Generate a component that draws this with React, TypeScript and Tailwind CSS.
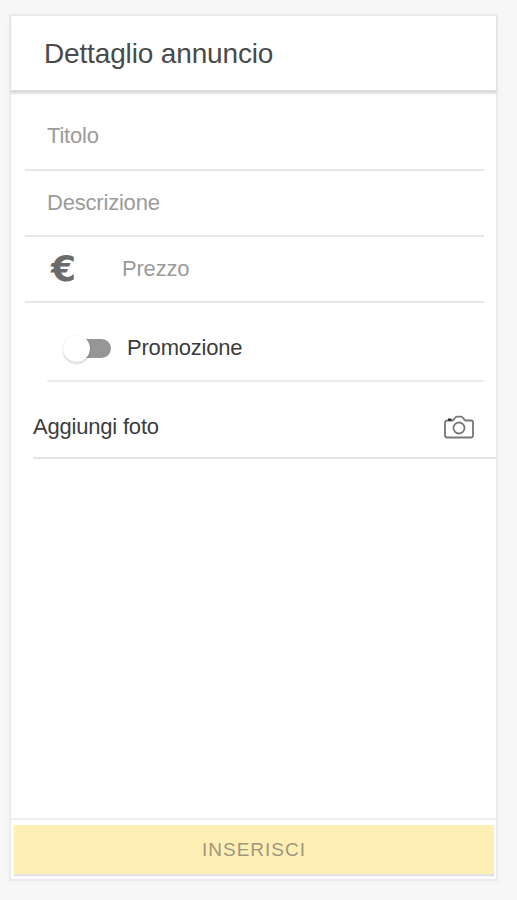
import { useState } from 'react'

const fields = [
  { name: 'titolo', placeholder: 'Titolo', height: 'h-[69px]' },
  { name: 'descrizione', placeholder: 'Descrizione', height: 'h-[66px]' },
]

function CameraIcon() {
  return (
    <svg className="h-6 w-[30px]" viewBox="0 0 30 24" fill="none" stroke="#777" strokeWidth={1.8}>
      <path d="M3 5.5h5.2c.9 0 1.300-.5 1.800-1.200l.9-1.300c.6-.8 1.100-1.300 2-1.300h4.200c.9 0 1.400.5 2 1.300l.9 1.300c.5.7.9 1.200 1.800 1.200H27c1.100 0 2 .8 2 1.900v13.200c0 1.100-.9 1.900-2 1.900H3c-1.100 0-2-.8-2-1.900V7.400c0-1.100.9-1.900 2-1.900Z" />
      <circle cx="15" cy="13" r="5.5" />
      <path d="M4 4.700h3.500" stroke="#2e2e2e" strokeWidth={2.4} />
    </svg>
  )
}

export default function App() {
  const [promo, setPromo] = useState(false)

  return (
    <div className="h-[900px] w-[517px] bg-[#f7f7f7] pt-[14px] pl-[9px] font-['Liberation_Sans',Arial,sans-serif] text-[22px] leading-none tracking-[-0.2px]">
      <div className="flex h-[867px] w-[489px] flex-col border-2 border-[#ebebeb] bg-white shadow-[0_0_14px_rgba(0,0,0,0.025)]">
        <header className="flex h-[77px] shrink-0 items-center border-b-3 border-[#dcdcdc] pl-[33px] shadow-[0_1px_2px_rgba(0,0,0,0.12)]">
          <h1 className="pt-px text-[28px] tracking-[-0.15px] text-[#4a4a4a]">Dettaglio annuncio</h1>
        </header>

        <main className="flex-1 pt-[9px]">
          {/* Text fields */}
          <div className="ml-[14px] w-[459px]">
            {fields.map((field) => (
              <div key={field.name} className={`flex items-center border-b-2 border-[#e7e7e7] pl-[22px] ${field.height}`}>
                <input
                  name={field.name}
                  placeholder={field.placeholder}
                  className="w-full bg-transparent text-[#555] outline-none placeholder:text-[#9b9b9b] placeholder:opacity-100"
                />
              </div>
            ))}
            <div className="flex h-[66px] items-center border-b-2 border-[#e7e7e7] pl-[26px]">
              <span className="w-[71px] font-['DejaVu_Sans',sans-serif] text-[36px] font-bold text-[#6b6b6b]">€</span>
              <input
                name="prezzo"
                placeholder="Prezzo"
                className="w-0 flex-1 bg-transparent text-[#555] outline-none placeholder:text-[#9b9b9b] placeholder:opacity-100"
              />
            </div>
          </div>

          {/* Promotion toggle */}
          <div className="ml-[36px] flex h-[79px] w-[437px] items-center border-b-2 border-[#ececec] pt-[13px] pl-[15px]">
            <button
              role="switch"
              aria-checked={promo}
              aria-label="Promozione"
              onClick={() => setPromo(!promo)}
              className="flex h-[28px] w-[49px] items-center"
            >
              <span className="ml-[3px] flex h-[19px] w-[46px] items-center rounded-full bg-[#969696]">
                <span className={`-ml-[2px] size-[27px] shrink-0 rounded-full bg-white shadow-[0_2px_2px_rgba(0,0,0,0.14),0_0_1px_rgba(0,0,0,0.12)] ${promo ? 'translate-x-[21px]' : ''}`} />
              </span>
            </button>
            <span className="ml-[16px] text-[#3c3c3c]">Promozione</span>
          </div>

          {/* Photo */}
          <div className="ml-[22px] flex h-[77px] items-center justify-between border-b-2 border-[#e4e4e4] pt-[14px] pr-[22px]">
            <span className="text-[#3c3c3c]">Aggiungi foto</span>
            <CameraIcon />
          </div>
        </main>

        <footer className="h-[61px] shrink-0 border-t-2 border-[#efefef] pt-[5px] pr-[2px] pl-[3px]">
          <button className="flex h-[49px] w-full items-center justify-center bg-[#fef0b5] text-[19px] tracking-[1px] text-[#a1967c] shadow-[0_2px_1px_#dfe0e2]">
            INSERISCI
          </button>
        </footer>
      </div>
    </div>
  )
}
